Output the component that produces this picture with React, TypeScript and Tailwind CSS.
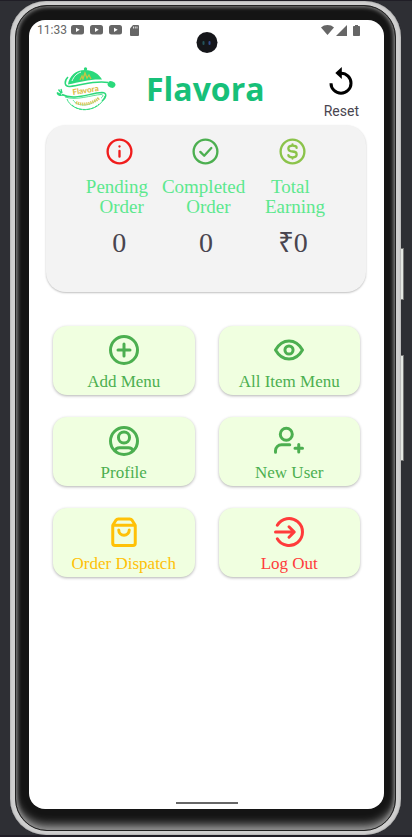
import type { ReactNode } from "react";

const SERIF = "font-['Liberation_Serif',serif]";
const SANS = "font-[Roboto,sans-serif]";

function Logo() {
  return (
    <svg viewBox="0 0 60 44" className="h-11 w-15 shrink-0" fill="none" role="img" aria-label="Flavora logo">
      <circle cx="29.5" cy="2" r="1.7" fill="#2bd97b" />
      <path d="M12 17.500C13 9 20 3 29 3C37 3 43 7 46 12.500C34 12 24 15 12 17.500Z" fill="#2bd97b" />
      <path d="M16 14C18 9 21 6.500 25 5" stroke="#fff" strokeWidth="0.9" />
      <path d="M24 13l2-4 1 3 2-6 2 5 2-3 2 4" stroke="#c9c443" strokeWidth="1.3" />
      <path d="M12 10C8 14 8 20 14 19.500C26 18.500 38 13 52 15.500" stroke="#2bd97b" strokeWidth="1.5" />
      <ellipse cx="55.500" cy="17.500" rx="4" ry="3.200" transform="rotate(20 55.500 17.500)" fill="#2bd97b" />
      <path d="M6 27.500C18 34 34 26 46 25.500C51 25.500 51 30 46 34" stroke="#2bd97b" strokeWidth="1.5" />
      <path d="M9 30C20 34 36 28 45 27.500C48 27.500 47 30 45 31" stroke="#2bd97b" strokeWidth="0.8" />
      <path d="M1 25.500l4 2M2.500 22.500l3 4M5 22l1 4M1 25.500c1 3 3 3.500 6 2.500" stroke="#2bd97b" strokeWidth="1.3" />
      <path d="M11 32C16 46 43 47 49 29" stroke="#2bd97b" strokeWidth="0.9" />
      <path d="M17 33C21 40 36 40 42 31" stroke="#2bd97b" strokeWidth="0.7" />
      <path d="M16 38C23 45 36 44 43 37" stroke="#2bd97b" strokeWidth="0.9" strokeDasharray="3 1" />
      <path d="M20 35.500C27 38.500 36 37 43 31" stroke="#dcc65a" strokeWidth="3" strokeDasharray="1.300 0.800" />
      <text
        x="29.500"
        y="26"
        textAnchor="middle"
        transform="rotate(-9 29.500 23)"
        fill="#dcbc45"
        className="font-[Lato,sans-serif] text-[8px] font-black"
      >
        Flavora
      </text>
    </svg>
  );
}

function YoutubeGlyph() {
  return (
    <svg viewBox="0 0 13 10" className="h-2.5 w-[13px]" aria-hidden="true">
      <rect width="13" height="9.500" rx="2.500" fill="#666" />
      <path d="M5 2.700v4.200l3.700-2.100z" fill="#fff" />
    </svg>
  );
}

function StatusBar() {
  return (
    <div className="flex h-5 items-center justify-between pr-6 pl-2">
      <div className="flex items-center gap-1.5">
        <span className={`${SANS} w-7 text-xs leading-5 whitespace-nowrap text-[#666]`}>11:33</span>
        <YoutubeGlyph />
        <YoutubeGlyph />
        <YoutubeGlyph />
        <svg viewBox="0 0 9 11" className="ml-0.5 h-[11px] w-[9px]" aria-hidden="true">
          <path d="M3 0h5a1 1 0 0 1 1 1v9a1 1 0 0 1-1 1H1a1 1 0 0 1-1-1V3.500z" fill="#666" />
          <path d="M3.500 1.500v2M5.300 1.500v2M7 1.500v2" stroke="#fff" strokeWidth="0.800" />
        </svg>
      </div>
      <div className="flex items-center">
        <svg viewBox="0 0 13 10" className="h-2.5 w-[13px]" aria-hidden="true">
          <path d="M0 2.500C3.500-.8 9.500-.8 13 2.500L6.500 10z" fill="#666" />
        </svg>
        <svg viewBox="0 0 11 11" className="ml-0.5 h-[11px] w-[11px]" aria-hidden="true">
          <path d="M11 0v11H0z" fill="#666" />
        </svg>
        <svg viewBox="0 0 7 11" className="ml-1.5 h-[11px] w-[7px]" aria-hidden="true">
          <path d="M2 0h3v1h1.200a.8.8 0 0 1 .8.8v8.400a.8.8 0 0 1-.8.8H.8a.8.8 0 0 1-.8-.8V1.800A.8.8 0 0 1 .8 1H2z" fill="#666" />
        </svg>
      </div>
    </div>
  );
}

function Icon({ children, className, stroke = 2 }: { children: ReactNode; className: string; stroke?: number }) {
  return (
    <svg
      viewBox="0 0 24 24"
      className={`shrink-0 ${className}`}
      fill="none"
      stroke="currentColor"
      strokeWidth={stroke}
      strokeLinecap="round"
      strokeLinejoin="round"
      aria-hidden="true"
    >
      {children}
    </svg>
  );
}

const stats = [
  {
    label: "Pending \n Order",
    value: "0",
    color: "text-[#f01c1c]",
    icon: (
      <>
        <circle cx="12" cy="12" r="9.200" />
        <path d="M12 11.500v4.500M12 8v.2" />
      </>
    ),
  },
  {
    label: "Completed \n Order",
    value: "0",
    color: "text-[#4caf50]",
    icon: (
      <>
        <circle cx="12" cy="12" r="9.200" />
        <path d="M8 12.300l3 3 5.500-6" />
      </>
    ),
  },
  {
    label: "Total \n Earning",
    value: "₹0",
    color: "text-[#8bc34a]",
    icon: (
      <>
        <circle cx="12" cy="12" r="9.200" />
        <path d="M15.200 9.200C15.200 7.900 14 7.500 12 7.500s-3.200.6-3.200 2.200S10 12 12 12s3.200.8 3.200 2.300-1.200 2.200-3.200 2.200-3.200-.5-3.200-1.700M12 6.500v1M12 16.500v1" />
      </>
    ),
  },
];

const actions = [
  {
    label: "Add Menu",
    color: "text-[#4caf50]",
    icon: (
      <>
        <circle cx="12" cy="12" r="9" />
        <path d="M12 8v8M8 12h8" />
      </>
    ),
  },
  {
    label: "All Item Menu",
    color: "text-[#4caf50]",
    icon: (
      <>
        <path d="M3 12c2-3.500 5-6 9-6s7 2.500 9 6c-2 3.500-5 6-9 6s-7-2.500-9-6z" />
        <circle cx="12" cy="12" r="2.700" />
      </>
    ),
  },
  {
    label: "Profile",
    color: "text-[#4caf50]",
    icon: (
      <>
        <circle cx="12" cy="12" r="9" />
        <circle cx="12" cy="9.700" r="3.700" />
        <path d="M6 18.500c.5-1.500 1.500-2 3-2h6c1.500 0 2.500.5 3 2" />
      </>
    ),
  },
  {
    label: "New User",
    color: "text-[#4caf50]",
    icon: (
      <>
        <circle cx="10.200" cy="7.500" r="4" />
        <path d="M3 19.500v-1a4 4 0 0 1 4-4h5.500M18.500 14.300v5M16 16.800h5" />
      </>
    ),
  },
  {
    label: "Order Dispatch",
    color: "text-[#ffc107]",
    icon: (
      <>
        <path d="M4.500 7.500v12a1.500 1.500 0 0 0 1.500 1.500h12a1.500 1.500 0 0 0 1.500-1.500v-12zM4.500 7.500l2-3.200c.5-.7 1-.9 1.700-.9h7.600c.7 0 1.200.2 1.700.9l2 3.200" />
        <path d="M8.500 10.700a3.500 3.500 0 0 0 7 0" />
      </>
    ),
  },
  {
    label: "Log Out",
    color: "text-[#ff3b3b]",
    icon: (
      <>
        <path d="M4.200 7.500a9 9 0 1 1 0 9M3 12h12M12 8.500l3.500 3.500-3.500 3.500" />
      </>
    ),
  },
];

export default function App() {
  return (
    <div className="flex min-h-screen flex-col border-t border-b-2 border-[#201e26] bg-[#2e2f34] pr-2">
      {/* phone shell */}
      <div className="relative ml-2.5 flex flex-1 flex-col">
        <span className="absolute top-[247px] right-0 h-13 w-1 border border-[#777] bg-[#e4e8e3]" />
        <span className="absolute top-[354px] right-0 h-[106px] w-1 border border-[#777] bg-[#e4e8e3]" />
        <div className="relative mr-[3px] flex flex-1 flex-col rounded-[36px] bg-[#cfcfcf] px-[5px] py-1 shadow-[inset_0_0_2px_#888]">
          <div className="flex flex-1 flex-col rounded-[32px] border border-[#222] bg-[#141414] pt-3.5 pr-[11px] pb-[21px] pl-[13px] shadow-[inset_0_0_4px_1px_#909090,inset_0_-9px_8px_-3px_#858585]">
            <main className="relative flex flex-1 flex-col rounded-2xl bg-white">
              <div className="absolute top-3 left-1/2 flex size-[21px] -translate-x-1/2 items-center justify-center gap-1 rounded-full bg-[#15161a]">
                <span className="h-1 w-0.5 rounded-full bg-[#24545b]" />
                <span className="h-1 w-0.5 rounded-full bg-[#334c8f]" />
              </div>

              <StatusBar />

              <header className="flex h-[85px] items-end justify-between pr-[25px] pb-1 pl-[27px]">
                <div className="flex items-center gap-[30px] pb-2.5">
                  <Logo />
                  <h1 className="font-['Open_Sans',sans-serif] text-[32px] leading-10 font-bold text-[#17c079]">Flavora</h1>
                </div>
                <button type="button" className={`${SANS} flex flex-col items-center text-sm leading-5 text-[#49454f]`}>
                  <svg viewBox="0 0 24 28" className="mb-1.5 h-7 w-6" fill="none" aria-hidden="true">
                    <path d="M12 6.200a10 10 0 1 1-10 10" stroke="#000" strokeWidth="3" />
                    <path d="M12.800 0v12L6.300 6z" fill="#000" />
                  </svg>
                  Reset
                </button>
              </header>

              <section className="mr-[18px] ml-[17px] grid h-[167px] grid-cols-3 rounded-[20px] bg-[#f3f3f3] px-[30px] pt-[11px] shadow-[0_1px_2px_#00000040]">
                {stats.map((s) => (
                  <div key={s.label} className={`${SERIF} flex flex-col items-center`}>
                    <Icon className={`size-[31px] ${s.color}`} stroke={1.8}>
                      {s.icon}
                    </Icon>
                    <p className="mt-2.5 text-center text-[19px] leading-5 whitespace-pre text-[#5ce88e]">{s.label}</p>
                    <p className="mt-2 text-[28px] leading-9 text-[#49454f]">{s.value}</p>
                  </div>
                ))}
              </section>

              <nav className="mx-6 mt-[34px] grid grid-cols-2 gap-x-6 gap-y-[22px]">
                {actions.map((a) => (
                  <button
                    key={a.label}
                    type="button"
                    className={`${SERIF} flex h-[69px] flex-col items-center rounded-[14px] bg-[#f0ffe0] pt-1.5 text-[17px] leading-5 whitespace-nowrap shadow-[0_1px_3px_#0000004d] ${a.color}`}
                  >
                    <Icon className="size-9">{a.icon}</Icon>
                    <span className="mt-1">{a.label}</span>
                  </button>
                ))}
              </nav>

              <div className="mx-auto mt-auto mb-[5px] h-0.5 w-[62px] bg-[#666]" />
            </main>
          </div>
        </div>
      </div>
    </div>
  );
}
